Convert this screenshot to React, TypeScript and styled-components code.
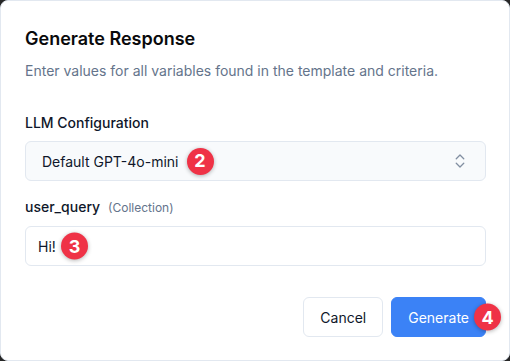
import React from 'react';
import styled, { createGlobalStyle } from 'styled-components';
import { ChevronsUpDown } from 'lucide-react';

const GlobalStyle = createGlobalStyle`
  html, body {
    margin: 0;
    padding: 0;
    background: #262626;
  }
  * {
    box-sizing: border-box;
  }
`;

const Dialog = styled.div`
  width: 510px;
  height: 361px;
  background: #fff;
  border: 1px solid #e2e8f0;
  border-radius: 8px;
  padding: 24px 23px 23px 24px;
  display: flex;
  flex-direction: column;
  font-family: Inter, 'Liberation Sans', sans-serif;
  color: #0f172a;
`;

const Header = styled.div`
  display: flex;
  flex-direction: column;
  gap: 8px;
  margin-bottom: 32px;
`;

const Title = styled.h2`
  margin: 0;
  font-size: 18px;
  line-height: 28px;
  font-weight: 600;
  color: #09090b;
`;

const Description = styled.p`
  margin: 0;
  font-size: 14px;
  line-height: 20px;
  color: #64748b;
`;

const Field = styled.div`
  display: flex;
  flex-direction: column;
  gap: 8px;
  & + & {
    margin-top: 16px;
  }
`;

const Label = styled.label`
  font-size: 14px;
  line-height: 20px;
  font-weight: 500;
  color: #0f172a;
  display: flex;
  align-items: baseline;
  gap: 8px;
`;

const Hint = styled.span`
  font-size: 12px;
  font-weight: 400;
  color: #64748b;
`;

const SelectTrigger = styled.button`
  height: 40px;
  width: 100%;
  display: flex;
  align-items: center;
  gap: 8px;
  padding: 0 16px;
  border: 1px solid #e2e8f0;
  border-radius: 6px;
  background: #f8fafc;
  font-family: inherit;
  font-size: 14px;
  color: #0f172a;
  text-align: left;
  cursor: pointer;
  svg {
    margin-left: auto;
    color: #64748b;
    opacity: 0.8;
  }
`;

const InputWrap = styled.div`
  position: relative;
`;

const TextInput = styled.input`
  height: 40px;
  width: 100%;
  padding: 0 12px;
  border: 1px solid #e2e8f0;
  border-radius: 6px;
  background: #fff;
  font-family: inherit;
  font-size: 14px;
  color: #0f172a;
  outline: none;
`;

const Badge = styled.span<{ $floating?: boolean; $left?: number; $right?: number }>`
  width: 27px;
  height: 27px;
  flex: none;
  border-radius: 50%;
  background: #ef3246;
  color: #fff;
  font-family: Inter, 'Liberation Sans', sans-serif;
  font-size: 18px;
  font-weight: 700;
  line-height: 1;
  display: inline-flex;
  align-items: center;
  justify-content: center;
  box-shadow: 0 1px 4px rgba(0, 0, 0, 0.3);
  ${p =>
    p.$floating &&
    `
    position: absolute;
    top: 50%;
    transform: translateY(-50%);
    ${p.$left !== undefined ? `left: ${p.$left}px;` : ''}
    ${p.$right !== undefined ? `right: ${p.$right}px;` : ''}
  `}
`;

const Footer = styled.div`
  margin-top: auto;
  display: flex;
  justify-content: flex-end;
  gap: 8px;
`;

const Button = styled.button<{ $primary?: boolean }>`
  position: relative;
  height: 40px;
  padding: 0 16px;
  border-radius: 6px;
  border: 1px solid ${p => (p.$primary ? '#3b82f6' : '#e2e8f0')};
  background: ${p => (p.$primary ? '#3b82f6' : '#fff')};
  color: ${p => (p.$primary ? '#fff' : '#0f172a')};
  font-family: inherit;
  font-size: 14px;
  font-weight: 400;
  cursor: pointer;
`;

export default function App() {
  return (
    <>
      <GlobalStyle />
      <Dialog>
        <Header>
          <Title>Generate Response</Title>
          <Description>Enter values for all variables found in the template and criteria.</Description>
        </Header>

        <Field>
          <Label>LLM Configuration</Label>
          <SelectTrigger type="button">
            <span>Default GPT-4o-mini</span>
            <Badge>2</Badge>
            <ChevronsUpDown size={18} strokeWidth={1.75} />
          </SelectTrigger>
        </Field>

        <Field>
          <Label>
            user_query <Hint>(Collection)</Hint>
          </Label>
          <InputWrap>
            <TextInput defaultValue="Hi!" />
            <Badge $floating $left={36}>3</Badge>
          </InputWrap>
        </Field>

        <Footer>
          <Button type="button">Cancel</Button>
          <Button type="button" $primary>
            Generate
            <Badge $floating $right={-16}>4</Badge>
          </Button>
        </Footer>
      </Dialog>
    </>
  );
}
